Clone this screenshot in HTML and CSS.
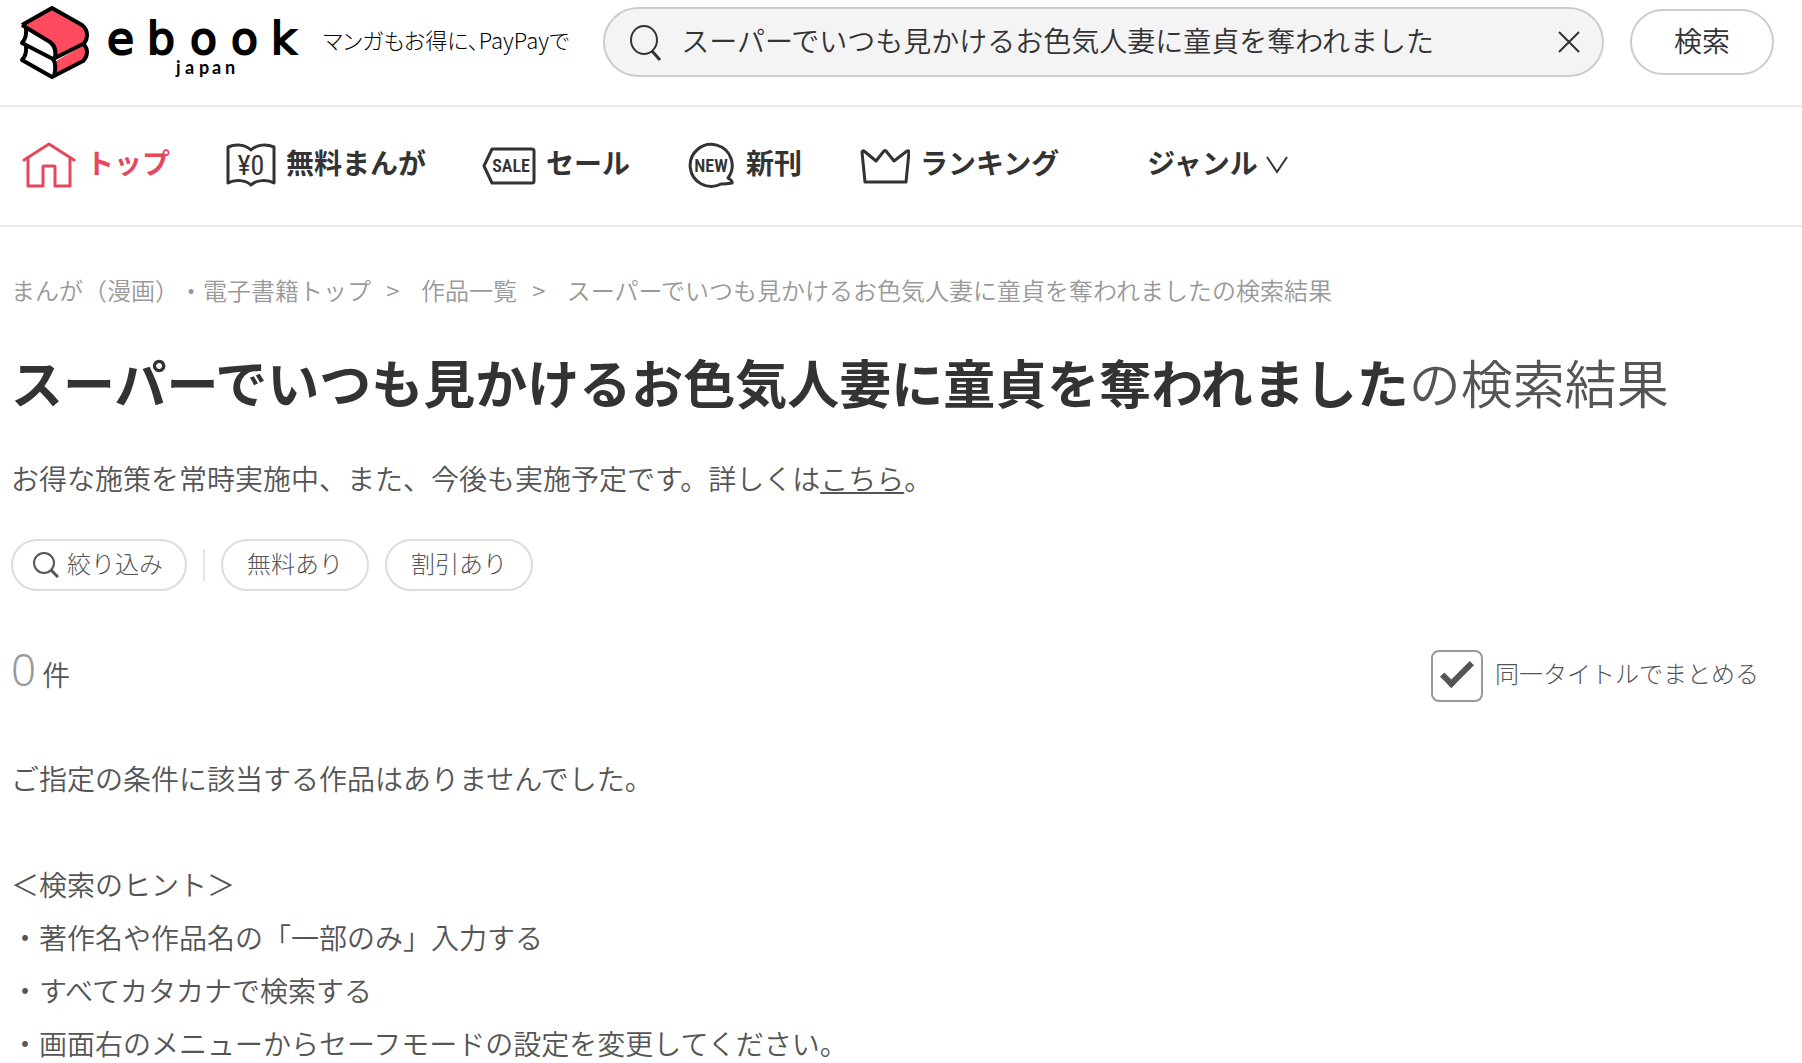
FILE: index.html
```html
<!DOCTYPE html>
<html lang="ja">

<head>
    <meta charset="UTF-8">
    <meta name="viewport" content="width=device-width, initial-scale=1.0">
    <title>ebookjapan</title>
    <link rel="stylesheet" href="styles.css">
</head>

<body>
    <header class="header">
        <a class="logo" href="#" aria-label="ebook japan">
            <svg width="280" height="78" viewBox="19 2 280 78">
                <path d="M24 24 L52 7 L82 24 Q88 28 88 34 Q88 40 83 44 Q88 47 87 55 Q87 59 83 62 L52 77 L22 59 L26 49 L22 42 L26 33 Z" fill="#fff"/>
                <path d="M24 24 L52 7 L82 24 Q88 28 88 34 Q88 39 84 42 L55 57 Q56 47 50 42 Z" fill="#ff4b5f"/>
                <path d="M56 60 L84 44 Q88 48 87 54 Q87 58 84 61 L55 75 Q57 68 56 60 Z" fill="#ff4b5f"/>
                <g fill="none" stroke="#000" stroke-width="4" stroke-linejoin="round">
                    <path d="M22 24 L52 7 L82 24 Q87 28 87 34 Q87 40 83 43 L53 58 L22 42 Q27 37 26 27"/>
                    <path d="M22 24 L50 41 Q57 46 55 57"/>
                    <path d="M26 45 Q27 54 22 59 L52 76 L83 60 Q87 56 87 51 Q87 46 83 43"/>
                    <path d="M53 58 Q57 64 54 75"/>
                </g>
                <text class="logo-name" x="107 147 190 231 271" y="53">ebook</text>
                <text class="logo-sub" x="176 185 199 212 225" y="73">japan</text>
            </svg>
        </a>
        <p class="tagline">マンガもお得に、PayPayで</p>
        <form class="search">
            <div class="search-box">
                <svg width="34" height="38" viewBox="0 0 34 38" fill="none" stroke="#333">
                    <ellipse cx="15" cy="17" rx="13" ry="14" stroke-width="2"/>
                    <path d="M23 28 L31 37" stroke-width="3"/>
                </svg>
                <input class="search-input" type="text" aria-label="作品を検索" value="スーパーでいつも見かけるお色気人妻に童貞を奪われました">
                <button class="clear-btn" type="reset" aria-label="クリア">
                    <svg width="22" height="22" viewBox="0 0 22 22" fill="none" stroke="#333" stroke-width="2">
                        <path d="M1 1 L21 21 M21 1 L1 21"/>
                    </svg>
                </button>
            </div>
            <button class="search-btn" type="button">検索</button>
        </form>
    </header>

    <nav class="nav">
        <a class="nav-item active" href="#">
            <svg width="54" height="48" viewBox="0 0 54 48" fill="none" stroke="#e5485d" stroke-width="3" stroke-linejoin="round" stroke-linecap="round">
                <path d="M2 19 L27 3 L52 19 M6 17 V45 H21 V26 Q21 25 22 25 H32 Q33 25 33 26 V45 H48 V17"/>
            </svg>
            <span>トップ</span>
        </a>
        <a class="nav-item" href="#">
            <svg width="50" height="48" viewBox="0 0 50 48" fill="none" stroke="#333" stroke-width="3" stroke-linejoin="round">
                <path d="M25 9 C19 3 9 3 2 6 V42 C9 38 20 39 25 44 C30 39 41 38 48 42 V6 C41 3 31 3 25 9 Z"/>
                <text class="icon-text yen" x="25" y="34">¥0</text>
            </svg>
            <span>無料まんが</span>
        </a>
        <a class="nav-item" href="#">
            <svg width="54" height="48" viewBox="0 0 54 48" fill="none" stroke="#333" stroke-width="3" stroke-linejoin="round">
                <path d="M10 8 H50 Q52 8 52 10 V40 Q52 42 50 42 H10 L2 25 Z"/>
                <text class="icon-text" x="29" y="31">SALE</text>
            </svg>
            <span>セール</span>
        </a>
        <a class="nav-item" href="#">
            <svg width="50" height="48" viewBox="0 0 50 48" fill="none" stroke="#333" stroke-width="3" stroke-linejoin="round">
                <path d="M42 37 A21 21 0 1 0 35 43 Q41 43 46 42 Q47 40 42 37 Z"/>
                <text class="icon-text" x="25" y="31">NEW</text>
            </svg>
            <span>新刊</span>
        </a>
        <a class="nav-item" href="#">
            <svg width="52" height="48" viewBox="0 0 52 48" fill="none" stroke="#333" stroke-width="3" stroke-linejoin="round">
                <path d="M7 41 L4 11 Q5 9 6 10 L18 20 L26 10 Q27 9 28 10 L36 20 L49 10 Q51 9 51 11 L48 41 Z"/>
            </svg>
            <span>ランキング</span>
        </a>
        <a class="nav-item genre" href="#">
            <span>ジャンル</span>
            <svg width="22" height="18" viewBox="0 0 22 18" fill="none" stroke="#333" stroke-width="2">
                <path d="M1 1 L11 16 L21 1"/>
            </svg>
        </a>
    </nav>

    <main class="main">
        <div class="breadcrumb">
            <a href="#">まんが（漫画）・電子書籍トップ</a>
            <span>&gt;</span>
            <a href="#">作品一覧</a>
            <span>&gt;</span>
            スーパーでいつも見かけるお色気人妻に童貞を奪われましたの検索結果
        </div>
        <h1 class="title"><b>スーパーでいつも見かけるお色気人妻に童貞を奪われました</b>の検索結果</h1>
        <p class="note">お得な施策を常時実施中、また、今後も実施予定です。詳しくは<a href="#">こちら</a>。</p>

        <div class="filters">
            <button class="chip chip-filter">
                <svg width="26" height="26" viewBox="0 0 26 26" fill="none" stroke="#555">
                    <circle cx="11" cy="11" r="10" stroke-width="2"/>
                    <path d="M18 18 L25 25" stroke-width="3"/>
                </svg>
                絞り込み
            </button>
            <span class="divider"></span>
            <button class="chip">無料あり</button>
            <button class="chip">割引あり</button>
        </div>

        <div class="result-bar">
            <p class="count"><span class="count-num">0</span>件</p>
            <label class="group-check">
                <input type="checkbox" checked>
                <span>同一タイトルでまとめる</span>
            </label>
        </div>

        <p class="message">ご指定の条件に該当する作品はありませんでした。</p>
        <div class="hints">
            <p>＜検索のヒント＞</p>
            <p>・著作名や作品名の「一部のみ」入力する</p>
            <p>・すべてカタカナで検索する</p>
            <p>・画面右のメニューからセーフモードの設定を変更してください。</p>
        </div>
    </main>
</body>

</html>
```
FILE: styles.css
```css
* {
    box-sizing: border-box;
}

body {
    margin: 0;
    background-color: #fff;
    color: #555;
    font-family: "Noto Sans CJK JP", sans-serif;
    font-size: 28px;
    font-weight: 350;
    text-spacing-trim: space-all;
}

p, h1 {
    margin: 0;
}

a {
    color: inherit;
    text-decoration: none;
}

svg {
    display: block;
    flex-shrink: 0;
}

button, input {
    font: inherit;
    color: inherit;
}

.header {
    display: flex;
    align-items: center;
    height: 107px;
    padding: 0 28px 21px 19px;
    border-bottom: 2px solid #ebebeb;
    box-shadow: 0 1px 2px #f4f4f4;
}

.logo-name {
    stroke: #000;
    stroke-width: 2px;
    font-family: "DejaVu Sans", sans-serif;
    font-size: 44px;
    font-weight: 400;
}

.logo-sub {
    font-family: Lato, sans-serif;
    font-size: 18px;
    font-weight: 700;
}

.tagline {
    margin-left: 24px;
    padding-bottom: 6px;
    color: #000;
    font-size: 22px;
    font-weight: 300;
    font-feature-settings: "palt";
    white-space: nowrap;
}

.search {
    display: flex;
    flex: 1;
    align-items: center;
    gap: 26px;
    margin-left: 34px;
    color: #333;
}

.search-box {
    display: flex;
    flex: 1;
    align-items: center;
    height: 70px;
    padding: 0 22px 0 24px;
    border: 2px solid #ccc;
    border-radius: 35px;
    background-color: #f4f4f4;
}

.search-input {
    flex: 1;
    min-width: 0;
    margin-left: 18px;
    padding: 0 0 4px;
    border: none;
    background: none;
    outline: none;
}

.clear-btn {
    padding: 0;
    border: none;
    background: none;
}

.search-btn {
    width: 144px;
    height: 66px;
    padding: 0 0 4px;
    border: 2px solid #ccc;
    border-radius: 33px;
    background-color: #fff;
}

.nav {
    display: flex;
    gap: 56px;
    height: 120px;
    padding: 0 22px 3px;
    border-bottom: 2px solid #ebebeb;
    color: #333;
    font-weight: 700;
}

.nav-item {
    display: flex;
    align-items: center;
    gap: 10px;
    white-space: nowrap;
}

.nav-item span {
    padding-bottom: 6px;
}

.nav-item.active {
    color: #e5485d;
}

.nav-item.genre {
    gap: 8px;
    margin-left: 32px;
}

.icon-text {
    fill: #333;
    stroke: none;
    font-family: "Roboto Condensed", Roboto, sans-serif;
    font-size: 18px;
    font-weight: 600;
    text-anchor: middle;
}

.icon-text.yen {
    font-size: 28px;
    font-weight: 400;
}

.main {
    padding: 43px 43px 0 11px;
}

.breadcrumb {
    color: #999;
    font-size: 24px;
    line-height: 40px;
}

.breadcrumb span {
    margin: 0 16px 0 10px;
}

.title {
    margin-top: 32px;
    font-size: 52px;
    font-weight: 350;
    line-height: 80px;
}

.title b {
    color: #333;
    font-weight: 700;
}

.note {
    margin-top: 30px;
    line-height: 53px;
}

.note a {
    text-decoration: underline;
}

.filters {
    display: flex;
    align-items: center;
    gap: 16px;
    margin-top: 34px;
}

.chip {
    display: flex;
    align-items: center;
    gap: 8px;
    height: 52px;
    padding: 0 24px 6px;
    border: 2px solid #ddd;
    border-radius: 26px;
    background-color: #fff;
    font-size: 24px;
    font-weight: 300;
}

.chip svg {
    margin-top: 6px;
}

.chip-filter {
    padding: 0 22px 6px 20px;
}

.divider {
    width: 2px;
    height: 32px;
    background-color: #e5e5e5;
}

.result-bar {
    display: flex;
    align-items: center;
    justify-content: space-between;
    height: 52px;
    margin-top: 59px;
}

.count {
    padding-bottom: 14px;
}

.count-num {
    margin-right: 6px;
    color: #999;
    font-family: "Noto Sans", sans-serif;
    font-size: 44px;
}

.group-check {
    display: flex;
    align-items: center;
    gap: 12px;
    font-size: 24px;
    font-weight: 300;
}

.group-check span {
    padding-bottom: 8px;
}

.group-check input {
    appearance: none;
    width: 52px;
    height: 52px;
    margin: 0;
    border: 2px solid #999;
    border-radius: 8px;
}

.group-check input:checked::before {
    content: "";
    display: block;
    box-sizing: border-box;
    width: 32px;
    height: 16px;
    margin: 11px 8px;
    border: solid #555;
    border-width: 0 0 6px 6px;
    transform: rotate(-45deg);
}

.message {
    margin-top: 50px;
    line-height: 53px;
}

.hints {
    margin-top: 53px;
    line-height: 53px;
}
```
